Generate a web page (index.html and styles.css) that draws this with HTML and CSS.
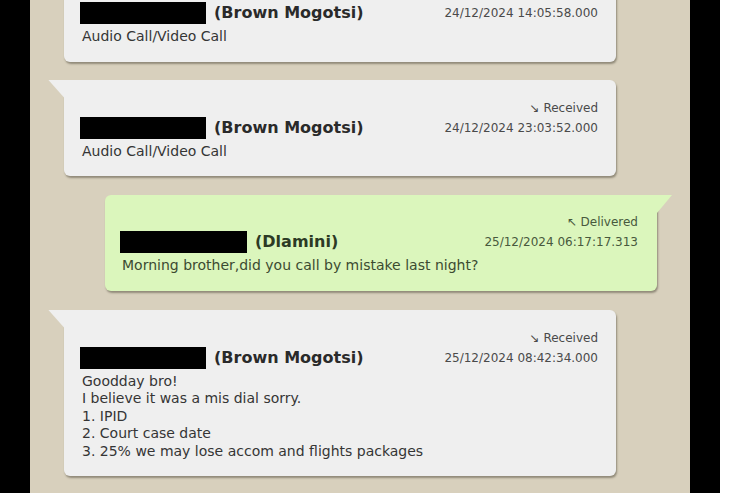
FILE: index.html
```html
<!DOCTYPE html>
<html lang="en">
<head>
    <meta charset="UTF-8">
    <title>chat export</title>
<link rel="stylesheet" href="styles.css">
</head>
<body>
	<div class="frame">
		<div class="edge"></div>
		<main class="chat">
			<!-- received (top cut off by the screenshot) -->
			<div class="msg in">
				<div class="head">
					<span class="status">&nbsp;</span>
					<div class="who"><span class="redact"></span><b>(Brown Mogotsi)</b></div>
					<span class="time">24/12/2024 14:05:58.000</span>
				</div>
				<div class="text">Audio Call/Video Call</div>
			</div>
			<div class="msg in tail">
				<div class="head">
					<span class="status">&#8600; Received</span>
					<div class="who"><span class="redact"></span><b>(Brown Mogotsi)</b></div>
					<span class="time">24/12/2024 23:03:52.000</span>
				</div>
				<div class="text">Audio Call/Video Call</div>
			</div>
			<!-- sent -->
			<div class="msg out tail">
				<div class="head">
					<span class="status">&#8598; Delivered</span>
					<div class="who"><span class="redact"></span><b>(Dlamini)</b></div>
					<span class="time">25/12/2024 06:17:17.313</span>
				</div>
				<div class="text">Morning brother,did you call by mistake last night?</div>
			</div>
			<div class="msg in tail">
				<div class="head">
					<span class="status">&#8600; Received</span>
					<div class="who"><span class="redact"></span><b>(Brown Mogotsi)</b></div>
					<span class="time">25/12/2024 08:42:34.000</span>
				</div>
				<div class="text">Goodday bro!<br>I believe it was a mis dial sorry.<br>1. IPID<br>2. Court case date<br>3. 25% we may lose accom and flights packages</div>
			</div>
		</main>
		<div class="edge"></div>
		<div class="blank"></div>
	</div>
</body>
</html>
```
FILE: styles.css
```css
*{padding:0;margin:0;box-sizing:border-box;}
html,body{height:100%;}
body{
	font-family:"DejaVu Sans","Noto Sans",sans-serif;
	background:#fff;
	overflow:hidden;
}
.frame{
	display:flex;
	height:493px;
}
.edge{
	width:30px;
	background:#000;
}
.blank{
	width:35px;
	background:#fff;
}
.chat{
	width:660px;
	background:#d8d0bd;
	display:flex;
	flex-direction:column;
	gap:18px;
	overflow:hidden;
}
.chat>.msg:first-child{margin-top:-35px;}
.msg{
	position:relative;
	width:552px;
	padding:19px 18px 16px 16px;
	border-radius:6px;
	box-shadow:1px 2px 2px rgba(60,55,40,.45);
	color:#353535;
	flex-shrink:0;
}
.msg.in{
	margin-left:34px;
	background:#efefef;
}
.msg.out{
	margin:1px 0 1px 75px;
	background:#dbf6bc;
	color:#3b4b31;
	padding:18px 19px 16px 15px;
}
.msg.in.tail{border-top-left-radius:0;}
.msg.out.tail{border-top-right-radius:0;}
.msg.tail::before{
	content:"";
	position:absolute;
	top:0;
	width:16px;
	height:18px;
}
.msg.in.tail::before{
	left:-16px;
	background:#efefef;
	clip-path:polygon(0 0,100% 0,100% 100%);
}
.msg.out.tail::before{
	right:-15px;
	width:15px;
	background:#dbf6bc;
	clip-path:polygon(0 0,100% 0,0 100%);
}
.head{
	display:grid;
	grid-template-columns:1fr auto;
	align-items:center;
}
.status{
	grid-column:2;
	text-align:right;
	font-size:12px;
	line-height:18px;
	color:#4a4a4a;
}
.out .status,.out .time{color:#48593d;}
.time{
	text-align:right;
	font-size:12px;
	line-height:18px;
	color:#4a4a4a;
}
.who{
	display:flex;
	align-items:center;
	gap:8px;
}
.redact{
	width:126px;
	height:22px;
	background:#000;
}
.out .redact{width:127px;}
.who b{
	font-size:16px;
	line-height:20px;
	color:#2a2a2a;
}
.out .who b{color:#2c3a24;}
.text{
	margin-top:4px;
	font-size:14px;
	line-height:17.5px;
	padding-left:2px;
}
```
